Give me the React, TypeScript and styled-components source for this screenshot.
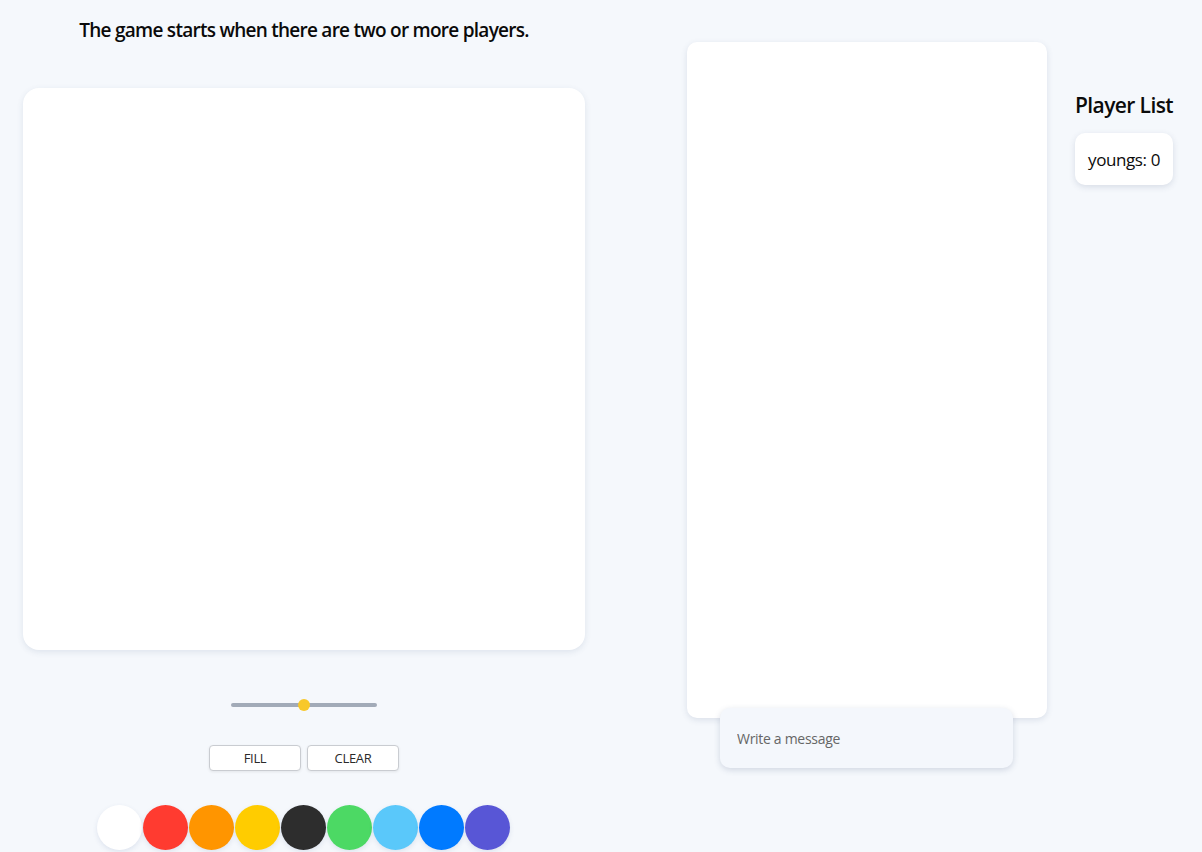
import React from "react";
import styled, { createGlobalStyle } from "styled-components";

const Global = createGlobalStyle`
  html, body { margin: 0; padding: 0; background: #f5f8fc; }
  body { font-family: "Open Sans", "Noto Sans", sans-serif; color: #0b0b0b; }
  * { box-sizing: border-box; }
`;

const Page = styled.div`
  display: flex;
  align-items: flex-start;
  width: 1202px;
  height: 852px;
  overflow: hidden;
`;

const LeftCol = styled.div`
  width: 608px;
  display: flex;
  flex-direction: column;
  align-items: center;
  padding-top: 18px;
`;

const Title = styled.h1`
  margin: 0;
  font-size: 19px;
  line-height: 24px;
  font-weight: 600;
  letter-spacing: -0.74px;
  color: #0a0a0a;
`;

const Canvas = styled.div`
  margin-top: 46px;
  width: 562px;
  height: 562px;
  background: #fff;
  border-radius: 16px;
  box-shadow: 0 2px 6px rgba(60, 80, 120, 0.12);
`;

const SliderWrap = styled.div`
  margin-top: 49px;
  width: 146px;
  height: 12px;
  position: relative;
  display: flex;
  align-items: center;
`;

const Track = styled.div`
  width: 100%;
  height: 4px;
  border-radius: 2px;
  background: #a2abb8;
`;

const Thumb = styled.div`
  position: absolute;
  top: 0;
  width: 12px;
  height: 12px;
  border-radius: 50%;
  background: #f8c82a;
`;

const ButtonRow = styled.div`
  margin-top: 34px;
  display: flex;
  gap: 6px;
`;

const Button = styled.button`
  width: 92px;
  height: 26px;
  border: 1px solid #c9ccd1;
  border-radius: 4px;
  background: #fff;
  font-family: "Open Sans", sans-serif;
  font-size: 13px;
  font-weight: 500;
  letter-spacing: -0.3px;
  color: #2a2a2a;
  box-shadow: 0 1px 3px rgba(0, 0, 0, 0.08);
  padding: 0;
`;

const Palette = styled.div`
  margin-top: 34px;
  margin-left: -2px;
  display: flex;
  gap: 1px;
`;

const Swatch = styled.div<{ $c: string }>`
  width: 45px;
  height: 45px;
  border-radius: 50%;
  background: ${(p) => p.$c};
  box-shadow: 0 2px 5px rgba(60, 80, 140, 0.12);
`;

const ChatCol = styled.div`
  margin-left: 79px;
  margin-top: 42px;
  width: 360px;
  display: flex;
  flex-direction: column;
  align-items: center;
`;

const ChatPanel = styled.div`
  width: 360px;
  height: 676px;
  background: #fff;
  border-radius: 10px;
  box-shadow: 0 2px 6px rgba(60, 80, 120, 0.14);
`;

const ChatInput = styled.input`
  position: relative;
  z-index: 1;
  margin-top: -10px;
  margin-left: -1px;
  width: 293px;
  height: 60px;
  border: none;
  outline: none;
  border-radius: 10px;
  background: #f4f7fc;
  box-shadow: 0 2px 6px rgba(60, 80, 120, 0.2);
  padding: 0 17px;
  font-family: "Open Sans", sans-serif;
  font-size: 14px;
  letter-spacing: -0.3px;
  color: #333;
  &::placeholder { color: #666; }
`;

const PlayerCol = styled.div`
  margin-left: 28px;
  margin-top: 92px;
  display: flex;
  flex-direction: column;
  align-items: flex-start;
`;

const PlayerTitle = styled.h2`
  margin: 0;
  font-size: 21px;
  line-height: 26px;
  font-weight: 600;
  letter-spacing: -0.6px;
  white-space: nowrap;
`;

const PlayerCard = styled.div`
  margin-top: 15px;
  width: 98px;
  height: 52px;
  background: #fff;
  border-radius: 10px;
  box-shadow: 0 2px 6px rgba(60, 80, 120, 0.16);
  display: flex;
  align-items: center;
  justify-content: center;
  font-size: 17px;
  letter-spacing: -0.4px;
`;

const colors = ["#ffffff", "#ff3b30", "#ff9500", "#ffcc00", "#2d2d2d", "#4cd964", "#5ac8fa", "#007aff", "#5856d6"];

export default function App() {
  return (
    <>
      <Global />
      <Page>
        <LeftCol>
          <Title>The game starts when there are two or more players.</Title>
          <Canvas />
          <SliderWrap>
            <Track />
            <Thumb style={{ left: `${0.5 * 146 - 6}px` }} />
          </SliderWrap>
          <ButtonRow>
            <Button>FILL</Button>
            <Button>CLEAR</Button>
          </ButtonRow>
          <Palette>
            {colors.map((c) => (
              <Swatch key={c} $c={c} />
            ))}
          </Palette>
        </LeftCol>
        <ChatCol>
          <ChatPanel />
          <ChatInput placeholder="Write a message" />
        </ChatCol>
        <PlayerCol>
          <PlayerTitle>Player List</PlayerTitle>
          <PlayerCard>youngs: 0</PlayerCard>
        </PlayerCol>
      </Page>
    </>
  );
}
